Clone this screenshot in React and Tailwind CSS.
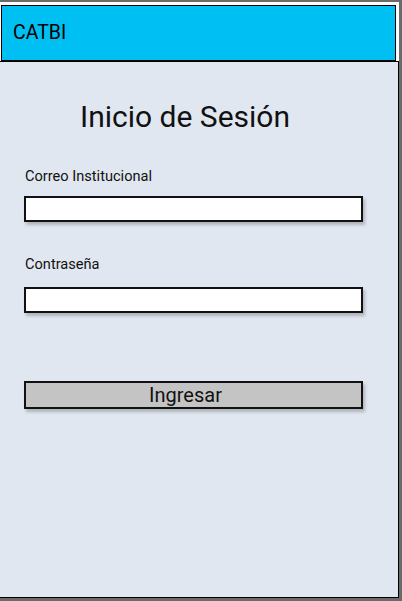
import React from "react";

const Field = ({ label, type = "text", labelGap, topGap }) => (
  <div className="flex flex-col" style={{ marginTop: topGap }}>
    <label className="ml-[1px] text-[14.6px] leading-[16px] text-[#111]">{label}</label>
    <input
      type={type}
      style={{ marginTop: labelGap }}
      className="w-[339px] h-[26px] bg-white border-2 border-[#111] shadow-[2px_3px_3px_rgba(0,0,0,0.22)] outline-none px-2 text-sm"
    />
  </div>
);

export default function App() {
  return (
    <div className="w-[402px] h-[601px] flex flex-col bg-white border-t-2 border-r-[3px] border-b-[3px] border-[#6b6b6b] font-['Roboto','Liberation_Sans',sans-serif] overflow-hidden">
      <header className="ml-[1px] mt-[3px] w-[395px] h-[56px] shrink-0 flex items-center bg-[#00C0F3] border border-black px-[11px]">
        <span className="text-[19.5px] leading-[20px] text-black">CATBI</span>
      </header>

      <main className="flex-1 flex flex-col bg-[#E1E7F0] border-t border-r border-b border-black pl-[24px]">
        <h1 className="mt-[38px] ml-[56px] text-[30px] leading-[34px] font-normal text-[#111]">
          Inicio de Sesión
        </h1>

        <Field label="Correo Institucional" topGap={34} labelGap={12} />
        <Field label="Contraseña" type="password" topGap={34} labelGap={15} />

        <button className="mt-[68px] w-[339px] h-[28px] bg-[#C4C4C4] border-2 border-[#111] shadow-[2px_3px_3px_rgba(0,0,0,0.22)] text-[20px] leading-[22px] text-[#111] pr-[16px]">
          Ingresar
        </button>
      </main>
    </div>
  );
}
